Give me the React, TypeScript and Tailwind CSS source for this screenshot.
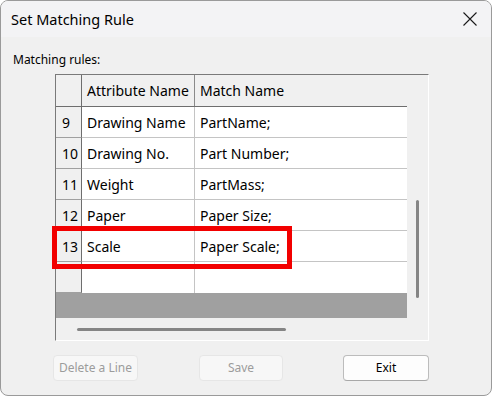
import React from "react";

const rows = [
  { n: "9", a: "Drawing Name", m: "PartName;" },
  { n: "10", a: "Drawing No.", m: "Part Number;" },
  { n: "11", a: "Weight", m: "PartMass;" },
  { n: "12", a: "Paper", m: "Paper Size;" },
  { n: "13", a: "Scale", m: "Paper Scale;" },
  { n: "", a: "", m: "" },
];

export default function App() {
  return (
    <div className="w-[492px] h-[397px] bg-white font-['Noto_Sans',sans-serif] text-black">
      <div className="w-[492px] h-[396px] rounded-lg border border-[#9a9a9a] overflow-hidden flex flex-col bg-[#f0f0f0]">
        {/* Title bar */}
        <div className="h-[36px] shrink-0 bg-[#f3f3f5] flex items-center justify-between pl-[10px] pr-[14px]">
          <span className="text-[14.5px] leading-none">Set Matching Rule</span>
          <svg width="14" height="14" viewBox="0 0 14 14" className="mr-[0px]">
            <path d="M0.5 0.5 L13.5 13.5 M13.5 0.5 L0.5 13.5" stroke="#1a1a1a" strokeWidth="1.1" fill="none" />
          </svg>
        </div>

        {/* Body */}
        <div className="flex-1 flex flex-col pt-[15px]">
          <div className="ml-[12px] text-[12px] leading-[16px]">Matching rules:</div>

          <div className="relative ml-[54px] mt-[6px] w-[374px] h-[267px] border border-t-[#7a7a7a] border-l-[#7a7a7a] border-r-white border-b-white flex flex-col">
            <div className="flex h-[243px]">
              {/* Grid area */}
              <div className="w-[351px] flex flex-col">
                {/* Header */}
                <div className="flex h-[32px] border-b border-[#6e6e6e] bg-[#f0f0f0] text-[14px]">
                  <div className="w-[26px] border-r border-[#6e6e6e]" />
                  <div className="w-[113px] border-r border-[#8a8a8a] pl-[5px] flex items-center">Attribute Name</div>
                  <div className="w-[212px] pl-[5px] flex items-center">Match Name</div>
                </div>
                {rows.map((r, i) => (
                  <div key={i} className="flex h-[31px] text-[14px]">
                    <div className="w-[26px] border-r border-b border-r-[#6e6e6e] border-b-[#a0a0a0] bg-[#f0f0f0] pl-[6px] flex items-center">
                      {r.n}
                    </div>
                    <div className={`w-[113px] border-r border-[#c4c4c4] bg-white pl-[5px] flex items-center ${i < 5 ? "border-b" : ""}`}>
                      {r.a}
                    </div>
                    <div className={`w-[212px] border-[#c4c4c4] bg-white pl-[5px] flex items-center ${i < 5 ? "border-b" : ""}`}>
                      {r.m}
                    </div>
                  </div>
                ))}
                <div className="flex-1 bg-[#a0a0a0]" />
              </div>
              {/* Vertical scrollbar */}
              <div className="flex-1 bg-[#f0f0f0] relative">
                <div className="absolute left-[9px] top-[125px] w-[3px] h-[98px] rounded-full bg-[#858585]" />
              </div>
            </div>
            {/* Horizontal scrollbar */}
            <div className="h-[22px] bg-[#f0f0f0] relative">
              <div className="absolute left-[21px] top-[10px] h-[3px] w-[209px] rounded-full bg-[#858585]" />
            </div>

            {/* Red highlight */}
            <div className="absolute -left-[4px] top-[151px] w-[240px] h-[43px] border-[5px] border-[#f20000]" />
          </div>

          {/* Buttons */}
          <div className="flex ml-[52px] mt-[14px] text-[12px]">
            <div className="w-[85px] h-[26px] rounded-[4px] border border-[#e6e6e6] bg-[#f7f7f7] text-[#9c9c9c] flex items-center justify-center">
              Delete a Line
            </div>
            <div className="ml-[61px] w-[84px] h-[26px] rounded-[4px] border border-[#e6e6e6] bg-[#f7f7f7] text-[#9c9c9c] flex items-center justify-center">
              Save
            </div>
            <div className="ml-[60px] w-[86px] h-[26px] rounded-[4px] border border-[#bcbcbc] border-b-[#a8a8a8] bg-[#fdfdfd] flex items-center justify-center">
              Exit
            </div>
          </div>
        </div>
      </div>
    </div>
  );
}
